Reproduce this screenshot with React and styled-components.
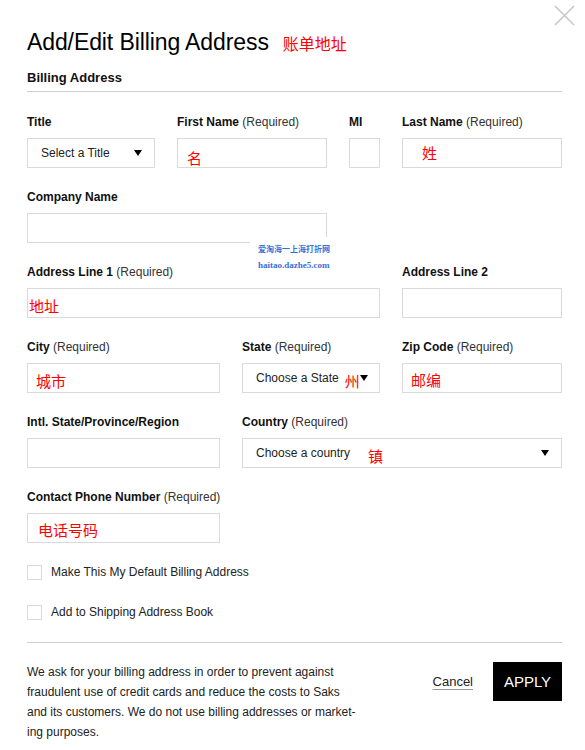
import React from 'react';
import styled, {createGlobalStyle} from 'styled-components';

const GlobalStyle = createGlobalStyle`
  body {
    margin: 0;
    background: #fff;
    font-family: "Liberation Sans", Arial, sans-serif;
    color: #222;
  }
`;

const Modal = styled.div`
  position: relative;
  width: 585px;
  box-sizing: border-box;
  padding: 28px 23px 0 27px;
`;

const Close = styled.button`
  position: absolute;
  top: 5px;
  right: 10px;
  width: 21px;
  height: 21px;
  padding: 0;
  border: 0;
  background: none;
  cursor: pointer;
`;

const Header = styled.div`
  display: flex;
  align-items: baseline;
`;

const Title = styled.h1`
  margin: 0;
  font-size: 23px;
  line-height: 28px;
  font-weight: normal;
  letter-spacing: -0.1px;
  color: #000;
`;

const Note = styled.span`
  flex-shrink: 0;
  font-family: "Noto Sans CJK SC", sans-serif;
  font-size: ${p => p.$size || 15}px;
  line-height: 1;
  color: #f00;
  margin-left: ${p => p.$left || 0}px;
  margin-top: ${p => (p.$dy || 0) * 2}px;
`;

const Section = styled.h2`
  margin: 14px 0 0;
  padding-bottom: 5px;
  border-bottom: 1px solid #d0d0d0;
  font-size: 13px;
  line-height: 16px;
  font-weight: bold;
  color: #111;
`;

const Form = styled.div`
  display: flex;
  flex-direction: column;
  gap: 21px;
  margin-top: 22px;
`;

const Row = styled.div`
  display: flex;
  gap: 22px;
`;

const Field = styled.div`
  display: flex;
  flex-direction: column;
  ${p => (p.$w ? `width: ${p.$w}px;` : 'flex: 1;')}
`;

const Label = styled.div`
  font-size: 12px;
  line-height: 16px;
  margin-bottom: 8px;
  color: #333;
  white-space: nowrap;

  b {
    color: #111;
  }
`;

const Box = styled.div`
  display: flex;
  align-items: center;
  height: 30px;
  box-sizing: border-box;
  border: 1px solid #dadada;
  padding: 0 12px 0 ${p => (p.$pad == null ? 12 : p.$pad)}px;
  font-size: 12px;
  color: #222;
  background: #fff;
  overflow: hidden;
`;

const Placeholder = styled.span`
  flex-shrink: 0;
  white-space: nowrap;
  padding-left: 1px;
`;

const Arrow = styled.span`
  flex-shrink: 0;
  margin-left: auto;
  width: 0;
  height: 0;
  border-left: 4px solid transparent;
  border-right: 4px solid transparent;
  border-top: 6px solid #000;
`;

const Checks = styled.div`
  display: flex;
  flex-direction: column;
  gap: 25px;
  margin-top: 22px;
`;

const Check = styled.label`
  display: flex;
  align-items: center;
  gap: 9px;
  font-size: 12px;
  line-height: 15px;
  color: #222;
`;

const CheckBox = styled.span`
  width: 15px;
  height: 15px;
  box-sizing: border-box;
  border: 1px solid #dadada;
`;

const Footer = styled.div`
  display: flex;
  justify-content: space-between;
  align-items: flex-start;
  margin-top: 22px;
  padding-top: 19px;
  border-top: 1px solid #d0d0d0;
`;

const Disclaimer = styled.p`
  margin: 0;
  font-size: 12px;
  line-height: 20px;
  color: #222;
`;

const Actions = styled.div`
  display: flex;
  align-items: center;
  gap: 20px;
`;

const Cancel = styled.a`
  font-size: 13px;
  color: #222;
  text-decoration: underline;
  text-decoration-color: #999;
  text-underline-offset: 3px;
`;

const Apply = styled.button`
  width: 69px;
  height: 39px;
  border: 0;
  background: #000;
  color: #fff;
  font-family: inherit;
  font-size: 15px;
  padding: 0;
`;

const Watermark = styled.div`
  position: absolute;
  left: 250px;
  top: 237px;
  width: 92px;
  height: 38px;
  background: #fff;
  padding: 6px 0 0 8px;
  box-sizing: border-box;
  color: #3a6fd6;
  font-weight: bold;
  line-height: 18px;

  div:first-child {
    font-family: "Noto Sans CJK SC", serif;
    font-size: 8px;
    line-height: 12px;
  }
  div:last-child {
    font-family: "Liberation Serif", serif;
    font-size: 9px;
    line-height: 16px;
    margin-top: 2px;
  }
`;

const Req = () => <> (Required)</>;

export default function App() {
  return <Modal>
    <GlobalStyle />
    <Close aria-label="Close">
      <svg width="21" height="21" viewBox="0 0 21 21">
        <path d="M1 1L20 20M20 1L1 20" stroke="#c8c8c8" strokeWidth="1.6" fill="none" />
      </svg>
    </Close>

    <Header>
      <Title>Add/Edit Billing Address</Title>
      <Note $size={16} $left={14}>账单地址</Note>
    </Header>

    <Section>Billing Address</Section>

    <Form>
      <Row>
        <Field $w={128}>
          <Label><b>Title</b></Label>
          <Box $pad={12}><Placeholder>Select a Title</Placeholder><Arrow /></Box>
        </Field>
        <Field $w={150}>
          <Label><b>First Name</b><Req /></Label>
          <Box $pad={9}><Note $dy={4}>名</Note></Box>
        </Field>
        <Field $w={31}>
          <Label><b>MI</b></Label>
          <Box />
        </Field>
        <Field>
          <Label><b>Last Name</b><Req /></Label>
          <Box $pad={19}><Note $dy={-1}>姓</Note></Box>
        </Field>
      </Row>

      <Row>
        <Field $w={300}>
          <Label><b>Company Name</b></Label>
          <Box />
        </Field>
      </Row>

      <Row>
        <Field $w={353}>
          <Label><b>Address Line 1</b><Req /></Label>
          <Box $pad={1}><Note $dy={2}>地址</Note></Box>
        </Field>
        <Field>
          <Label><b>Address Line 2</b></Label>
          <Box />
        </Field>
      </Row>

      <Row>
        <Field $w={193}>
          <Label><b>City</b><Req /></Label>
          <Box $pad={8}><Note $dy={2}>城市</Note></Box>
        </Field>
        <Field $w={138}>
          <Label><b>State</b><Req /></Label>
          <Box $pad={12}>
            <Placeholder>Choose a State</Placeholder>
            <Note $left={6} $dy={2}>州</Note>
            <Arrow />
          </Box>
        </Field>
        <Field>
          <Label><b>Zip Code</b><Req /></Label>
          <Box $pad={8}><Note $dy={1}>邮编</Note></Box>
        </Field>
      </Row>

      <Row>
        <Field $w={193}>
          <Label><b>Intl. State/Province/Region</b></Label>
          <Box />
        </Field>
        <Field>
          <Label><b>Country</b><Req /></Label>
          <Box $pad={12}>
            <Placeholder>Choose a country</Placeholder>
            <Note $left={18} $dy={2}>镇</Note>
            <Arrow />
          </Box>
        </Field>
      </Row>

      <Row>
        <Field $w={193}>
          <Label><b>Contact Phone Number</b><Req /></Label>
          <Box $pad={10}><Note $dy={1}>电话号码</Note></Box>
        </Field>
      </Row>
    </Form>

    <Checks>
      <Check><CheckBox />Make This My Default Billing Address</Check>
      <Check><CheckBox />Add to Shipping Address Book</Check>
    </Checks>

    <Footer>
      <Disclaimer>
        We ask for your billing address in order to prevent against<br />
        fraudulent use of credit cards and reduce the costs to Saks<br />
        and its customers. We do not use billing addresses or market-<br />
        ing purposes.
      </Disclaimer>
      <Actions>
        <Cancel>Cancel</Cancel>
        <Apply>APPLY</Apply>
      </Actions>
    </Footer>

    <Watermark>
      <div>爱淘海一上海打折网</div>
      <div>haitao.dazhe5.com</div>
    </Watermark>
  </Modal>;
}
